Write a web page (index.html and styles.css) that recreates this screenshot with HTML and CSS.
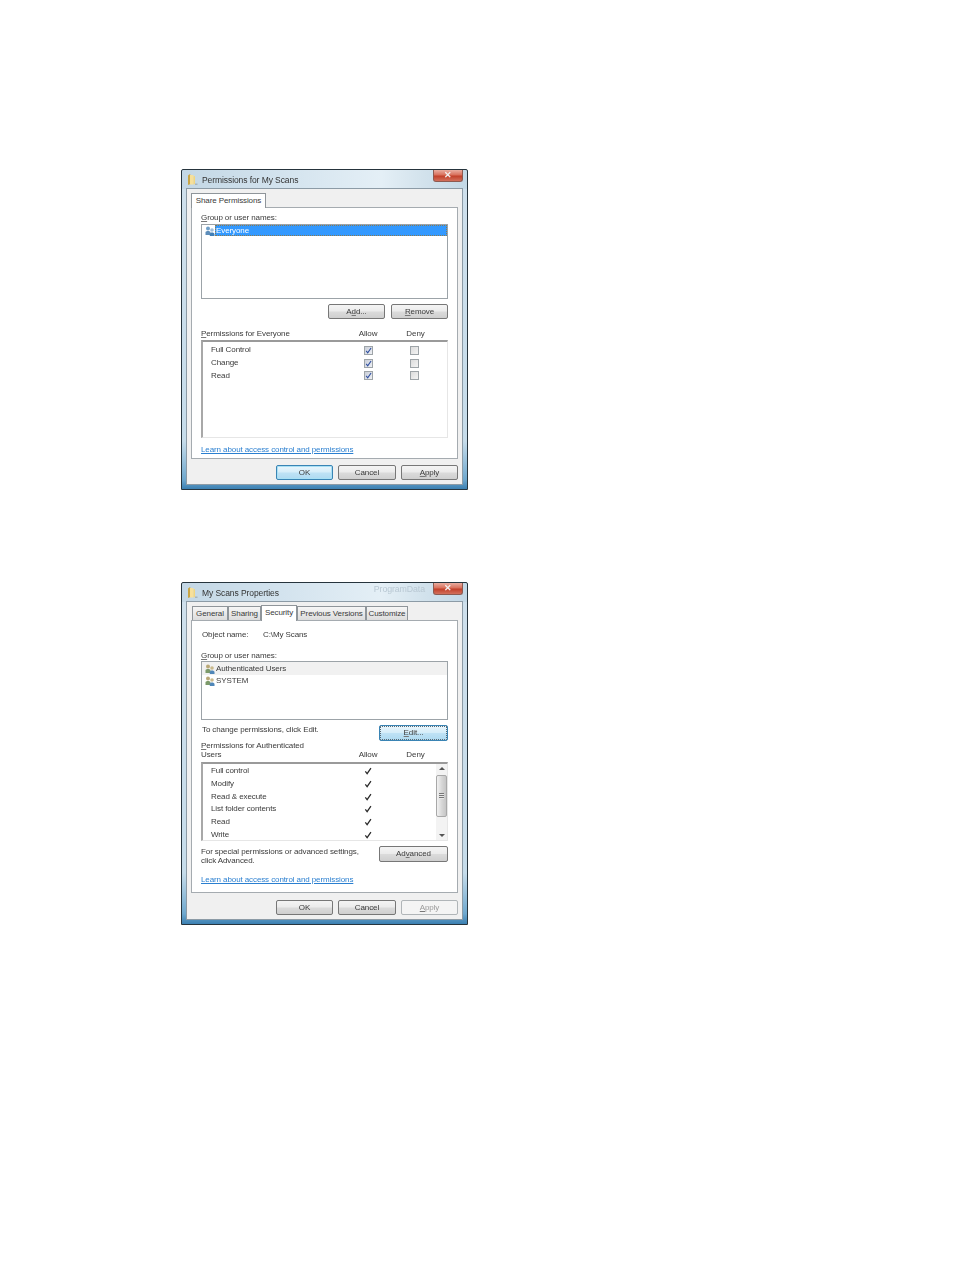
FILE: index.html
```html
<!DOCTYPE html>
<html lang="en">
<head>
<meta charset="utf-8">
<title>Permissions</title>
<link rel="stylesheet" href="styles.css">
</head>
<body>
<svg class="defs" width="0" height="0" aria-hidden="true">
  <defs>
    <symbol id="folder" viewBox="0 0 11 13">
      <path d="M1 2.500 3 1l.6 1.200V11L1 12z" fill="#c9a545"/>
      <path d="M3 2h3.500v9.500H3z" fill="#f7e09a"/>
      <path d="M6.500 3.500 8 3v8l-1.500.5z" fill="#f3d67e"/>
      <path d="M8 10.500h2.500V12H8z" fill="#a9b4ba"/>
    </symbol>
    <symbol id="users-blue" viewBox="0 0 10 10">
      <circle cx="3" cy="2.500" r="2" fill="#6f9fc9"/>
      <path d="M.5 9V6.500C.5 5.500 1.500 5 3 5s2.500.5 2.500 1.500V9z" fill="#5d8dba"/>
      <circle cx="7" cy="4" r="1.800" fill="#9dbddb"/>
      <path d="M4.800 10V8c0-1 .9-1.600 2.200-1.600S9.500 7 9.500 8v2z" fill="#3f7fb8"/>
    </symbol>
    <symbol id="users-mixed" viewBox="0 0 10 10">
      <circle cx="3" cy="2.500" r="2" fill="#b9a877"/>
      <path d="M.5 9V6.500C.5 5.500 1.500 5 3 5s2.500.5 2.500 1.500V9z" fill="#7c9a6a"/>
      <circle cx="7" cy="4" r="1.800" fill="#c9b98c"/>
      <path d="M4.800 10V8c0-1 .9-1.600 2.200-1.600S9.500 7 9.500 8v2z" fill="#4f86b8"/>
    </symbol>
    <symbol id="tick" viewBox="0 0 9 9">
      <path d="M1.500 5 3.500 7.500 7.800 1.200" fill="none" stroke="currentColor" stroke-width="1.400"/>
    </symbol>
  </defs>
</svg>

<main class="page">
  <section class="dialog dialog-first">
    <header class="titlebar">
      <svg class="folder"><use href="#folder"/></svg>
      <h1 class="title">Permissions for My Scans</h1>
      <span class="close">&#10005;</span>
    </header>
    <div class="client">
      <nav class="tabs">
        <span class="tab tab-single">Share Permissions</span>
      </nav>
      <div class="panel panel-share">
        <p class="label"><u>G</u>roup or user names:</p>
        <ul class="names names-share">
          <li class="name">
            <svg class="user-icon"><use href="#users-blue"/></svg>
            <span class="name-text name-selected">Everyone</span>
          </li>
        </ul>
        <div class="button-row button-row-list">
          <span class="btn btn-small">A<u>d</u>d...</span>
          <span class="btn btn-small"><u>R</u>emove</span>
        </div>
        <div class="perm-head perm-head-share">
          <span><u>P</u>ermissions for Everyone</span>
          <span class="col">Allow</span>
          <span class="col col-deny">Deny</span>
        </div>
        <div class="perm-list perm-list-share">
          <div class="perm-rows">
            <div class="perm-row"><span>Full Control</span><span class="box box-on"><svg class="box-tick"><use href="#tick"/></svg></span><span class="box"></span></div>
            <div class="perm-row"><span>Change</span><span class="box box-on"><svg class="box-tick"><use href="#tick"/></svg></span><span class="box"></span></div>
            <div class="perm-row"><span>Read</span><span class="box box-on"><svg class="box-tick"><use href="#tick"/></svg></span><span class="box"></span></div>
          </div>
        </div>
        <a class="link link-share">Learn about access control and permissions</a>
      </div>
      <footer class="footer footer-share">
        <span class="btn btn-foot btn-default">OK</span>
        <span class="btn btn-foot btn-cancel">Cancel</span>
        <span class="btn btn-foot"><u>A</u>pply</span>
      </footer>
    </div>
  </section>

  <section class="dialog dialog-second">
    <header class="titlebar">
      <svg class="folder"><use href="#folder"/></svg>
      <h1 class="title">My Scans Properties</h1>
      <span class="ghost">ProgramData</span>
      <span class="close">&#10005;</span>
    </header>
    <div class="client">
      <nav class="tabs">
        <span class="tab tab-general">General</span>
        <span class="tab tab-sharing">Sharing</span>
        <span class="tab tab-active">Security</span>
        <span class="tab tab-previous">Previous Versions</span>
        <span class="tab tab-customize">Customize</span>
      </nav>
      <div class="panel panel-security">
        <p class="object"><span class="object-key">Object name:</span><span>C:\My Scans</span></p>
        <p class="label label-group"><u>G</u>roup or user names:</p>
        <ul class="names names-security">
          <li class="name name-hover">
            <svg class="user-icon"><use href="#users-mixed"/></svg>
            <span class="name-text">Authenticated Users</span>
          </li>
          <li class="name">
            <svg class="user-icon"><use href="#users-mixed"/></svg>
            <span class="name-text">SYSTEM</span>
          </li>
        </ul>
        <div class="split split-edit">
          <p class="split-text">To change permissions, click Edit.</p>
          <span class="btn btn-wide btn-focus"><u>E</u>dit...</span>
        </div>
        <div class="perm-head perm-head-security">
          <span class="perm-head-title"><u>P</u>ermissions for Authenticated Users</span>
          <span class="col">Allow</span>
          <span class="col col-deny">Deny</span>
        </div>
        <div class="perm-list perm-list-security">
          <div class="perm-rows perm-rows-security">
            <div class="perm-row"><span>Full control</span><svg class="tick"><use href="#tick"/></svg><span></span></div>
            <div class="perm-row"><span>Modify</span><svg class="tick"><use href="#tick"/></svg><span></span></div>
            <div class="perm-row"><span>Read &amp; execute</span><svg class="tick"><use href="#tick"/></svg><span></span></div>
            <div class="perm-row"><span>List folder contents</span><svg class="tick"><use href="#tick"/></svg><span></span></div>
            <div class="perm-row"><span>Read</span><svg class="tick"><use href="#tick"/></svg><span></span></div>
            <div class="perm-row"><span>Write</span><svg class="tick"><use href="#tick"/></svg><span></span></div>
          </div>
          <div class="scrollbar">
            <span class="arrow arrow-up"></span>
            <span class="thumb"><span class="grip"></span></span>
            <span class="arrow arrow-down"></span>
          </div>
        </div>
        <div class="split split-advanced">
          <p class="split-text split-two">For special permissions or advanced settings,<br>click Advanced.</p>
          <span class="btn btn-wide">Ad<u>v</u>anced</span>
        </div>
        <a class="link link-security">Learn about access control and permissions</a>
      </div>
      <footer class="footer footer-security">
        <span class="btn btn-foot">OK</span>
        <span class="btn btn-foot btn-cancel">Cancel</span>
        <span class="btn btn-foot btn-disabled"><u>A</u>pply</span>
      </footer>
    </div>
  </section>
</main>
</body>
</html>
```

FILE: styles.css
```css
* { box-sizing: border-box; }

html, body { margin: 0; background: #fff; }

body {
  font-family: "Liberation Sans", Arial, sans-serif;
  font-size: 8px;
  line-height: 10px;
  letter-spacing: -0.1px;
  color: #3a3a3a;
}

.defs { display: block; height: 0; }

.page {
  width: 954px;
  height: 1270px;
  padding: 169px 0 0 181px;
  overflow: hidden;
}

p, ul, h1 { margin: 0; padding: 0; }
ul { list-style: none; }

u { text-underline-offset: 1px; text-decoration-thickness: 1px; text-decoration-color: #777; }

.dialog {
  width: 287px;
  border: 1px solid #26343d;
  border-radius: 2px 2px 0 0;
  padding: 0 4px 4px;
  filter: blur(0.3px);
  background:
    linear-gradient(90deg, #c3d7e5 0, #d3e3ee 35%, #e4eff6 70%, #d2e2ec 85%, #c3d8e6 100%) top / 100% 19px no-repeat,
    linear-gradient(180deg, #cfe0ec 0, #c6dcea 85%, #6fa8ce 97%, #3b80b2 100%);
}

.dialog-second { margin-top: 92px; }

.titlebar {
  display: flex;
  align-items: flex-start;
  height: 18px;
}

.folder {
  width: 11px;
  height: 13px;
  margin: 3px 0 0 1px;
  flex: none;
}

.title {
  margin: 4.500px 0 0 4px;
  font-size: 8.500px;
  line-height: 11px;
  font-weight: 400;
  letter-spacing: -0.08px;
  color: #333;
}

.ghost {
  margin: 1px 8px 0 auto;
  font-size: 8.800px;
  color: #b9c8d3;
}

.close {
  margin-left: auto;
  width: 30px;
  height: 12px;
  border: 1px solid #8e5a50;
  border-top: 0;
  border-radius: 0 0 3px 3px;
  background: linear-gradient(180deg, #e9ada0 0, #d9705c 45%, #c2402a 55%, #d2705c 100%);
  color: #f2f2f2;
  font-size: 9px;
  line-height: 11px;
  font-weight: 700;
  text-align: center;
}

.ghost + .close { margin-left: 0; }

.client {
  border: 1px solid #8c9ba6;
  background: #f0f0f0;
  padding: 4px;
}

.tabs {
  display: flex;
  align-items: flex-end;
  height: 14px;
  position: relative;
  z-index: 1;
}

.tab {
  height: 14px;
  border: 1px solid #8f959a;
  border-bottom: 0;
  background: linear-gradient(180deg, #f6f6f6, #dcdcdc);
  line-height: 14px;
  text-align: center;
  white-space: nowrap;
}

.tab-single { width: 75px; background: #fff; height: 15px; margin-bottom: -1px; line-height: 13px; }
.tab-general { width: 36px; margin-left: 1px; }
.tab-sharing { width: 33px; }
.tab-active { width: 36px; height: 16px; margin-bottom: -1px; background: #fff; line-height: 13px; }
.tab-previous { width: 69px; }
.tab-customize { width: 42px; }

.panel {
  border: 1px solid #a5abb0;
  background: #fff;
  padding: 0 9px;
}

.panel-share { height: 252px; padding-top: 5px; }
.panel-security { height: 273px; padding-top: 9px; }

.object { display: flex; padding-left: 1px; }
.object-key { width: 61px; }
.label-group { margin-top: 11px; }

.names {
  border: 1px solid #9ca3a8;
  margin-top: 1px;
  background: #fff;
}

.names-share { height: 75px; }
.names-security { height: 59px; margin-top: 0; }

.name {
  display: flex;
  align-items: center;
  height: 11px;
  padding-left: 3px;
}

.name-hover { background: #f1f1f1; height: 13px; }

.user-icon { width: 10px; height: 10px; flex: none; }

.name-text { flex: 1; padding-left: 1px; line-height: 11px; }

.name-selected {
  background: #3399ff;
  color: #fff;
  outline: 1px dotted #8a7a50;
  outline-offset: -1px;
}

.button-row {
  display: flex;
  justify-content: flex-end;
  gap: 6px;
  margin-top: 5px;
}

.btn {
  display: block;
  height: 15px;
  border: 1px solid #777;
  border-radius: 2px;
  background: linear-gradient(180deg, #f4f4f4 0, #ebebeb 48%, #dbdbdb 52%, #cfcfcf 100%);
  line-height: 14px;
  text-align: center;
  white-space: nowrap;
}

.btn-small { width: 57px; }
.btn-foot { width: 57px; }
.btn-cancel { width: 58px; }
.btn-wide { width: 69px; height: 16px; flex: none; }

.btn-default {
  border-color: #3a84b4;
  background: linear-gradient(180deg, #eaf6fc 0, #d5edf9 48%, #bfe2f5 52%, #aedaf1 100%);
  box-shadow: inset 0 0 0 1px #a8e0f5;
}

.btn-focus {
  border-color: #3a84b4;
  background: linear-gradient(180deg, #eaf6fc 0, #d5edf9 48%, #bfe2f5 52%, #aedaf1 100%);
  outline: 1px dotted #5a6a75;
  outline-offset: -2px;
}

.btn-disabled {
  border-color: #b0b5b8;
  background: #f4f4f4;
  color: #9a9a9a;
}

.perm-head {
  display: grid;
  grid-template-columns: 130px 20px 20px;
  column-gap: 27px;
  align-items: end;
}

.perm-head-share { margin-top: 10px; }
.perm-head-security { margin-top: 0; line-height: 9px; }
.perm-head-title { width: 110px; }

.col { text-align: center; white-space: nowrap; }
.col-deny { padding-left: 1px; }

.perm-list {
  display: flex;
  margin-top: 1px;
  border: 1px solid #e6e6e6;
  border-top: 2px solid #9a9a9a;
  border-left: 2px solid #a8a8a8;
}

.perm-list-share { height: 98px; }
.perm-list-security { height: 79px; margin-top: 3px; }

.perm-rows { flex: 1; padding: 2px 0 0 8px; min-width: 0; }
.perm-rows-security { padding-top: 1px; overflow: hidden; }

.perm-row {
  display: grid;
  grid-template-columns: 121px 20px 20px;
  column-gap: 26px;
  align-items: center;
  height: 12.700px;
  white-space: nowrap;
}

.box {
  width: 9px;
  height: 9px;
  border: 1px solid #9ea4a8;
  background: linear-gradient(135deg, #dcdcdc, #f4f4f4);
  justify-self: center;
  display: block;
}

.box-on { background: linear-gradient(135deg, #c9ced8, #eef0f4); color: #2f4fa0; }

.box-tick { display: block; width: 7px; height: 7px; }

.tick {
  width: 8px;
  height: 8px;
  justify-self: center;
  color: #2a2a2a;
}

.scrollbar {
  display: flex;
  flex-direction: column;
  align-items: center;
  width: 11px;
  flex: none;
  background: #f3f3f3;
  padding: 3px 0;
}

.arrow {
  width: 0;
  height: 0;
  border-left: 3px solid transparent;
  border-right: 3px solid transparent;
  flex: none;
}

.arrow-up { border-bottom: 3px solid #555; }
.arrow-down { border-top: 3px solid #555; margin-top: auto; }

.thumb {
  display: flex;
  align-items: center;
  justify-content: center;
  width: 11px;
  height: 42px;
  margin-top: 5px;
  border: 1px solid #a8a8a8;
  border-radius: 2px;
  background: linear-gradient(90deg, #f2f2f2, #d6d6d6 55%, #c6c6c6);
}

.grip {
  width: 5px;
  height: 6px;
  background: repeating-linear-gradient(180deg, #777 0 1px, #e8e8e8 1px 2px);
}

.link {
  display: block;
  color: #2a7fd0;
  text-decoration: underline;
  text-decoration-thickness: 1px;
  text-underline-offset: 1px;
  white-space: nowrap;
}

.link-share { margin-top: 7px; }
.link-security { margin-top: 10px; }

.split {
  display: flex;
  justify-content: space-between;
  align-items: flex-start;
  margin-top: 5px;
}

.split-text { padding-left: 1px; }
.split-two { line-height: 9px; padding-top: 0.500px; padding-left: 0; }

.footer {
  display: flex;
  justify-content: flex-end;
  gap: 5px;
}

.footer-share { margin-top: 6px; }
.footer-security { margin-top: 7px; }
```
